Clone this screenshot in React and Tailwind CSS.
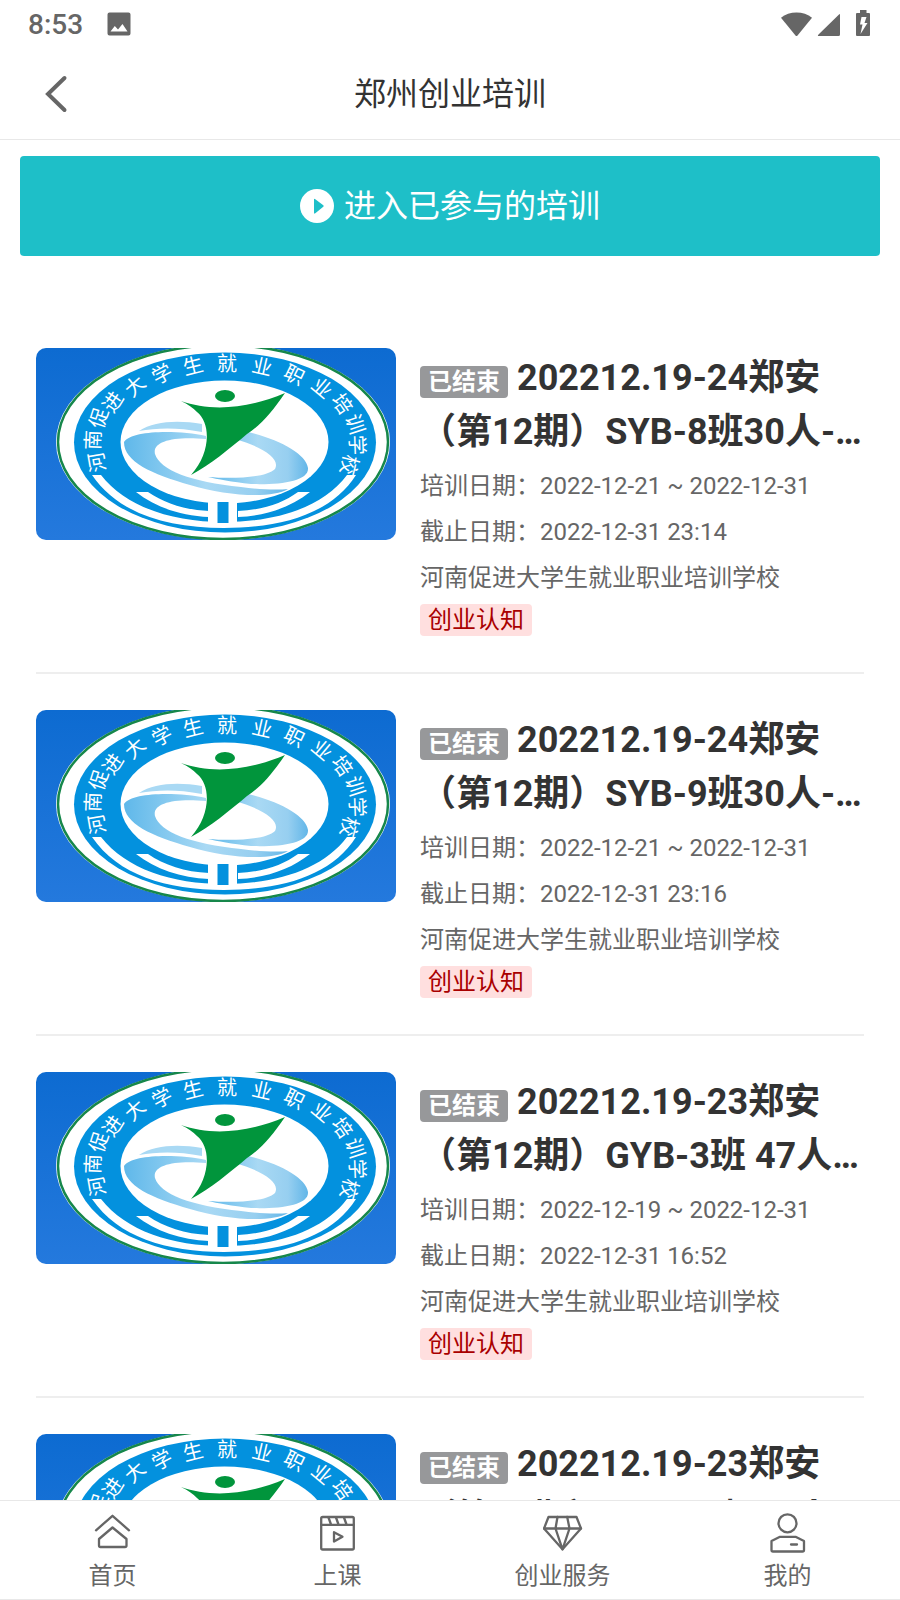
const courses = [
  {
    id: 1,
    title: "202212.19-24郑安（第12期）SYB-8班30人-创业培训",
    start: "2022-12-21",
    end: "2022-12-31",
    deadline: "2022-12-31 23:14",
  },
  {
    id: 2,
    title: "202212.19-24郑安（第12期）SYB-9班30人-创业培训",
    start: "2022-12-21",
    end: "2022-12-31",
    deadline: "2022-12-31 23:16",
  },
  {
    id: 3,
    title: "202212.19-23郑安（第12期）GYB-3班 47人-创业培训",
    start: "2022-12-19",
    end: "2022-12-31",
    deadline: "2022-12-31 16:52",
  },
  {
    id: 4,
    title: "202212.19-23郑安（第12期）GYB-2班 47人-创业培训",
    start: "2022-12-19",
    end: "2022-12-31",
    deadline: "2022-12-31 16:50",
  },
];

// school name around the ring: character, x, y, rotation
const ringText = [
  ["河", 61, 114, -100],
  ["南", 57, 92, -88],
  ["促", 63, 70, -72],
  ["进", 77, 54, -56],
  ["大", 99, 38, -42],
  ["学", 126, 26, -28],
  ["生", 157, 18, -14],
  ["就", 191, 16, 0],
  ["业", 226, 19, 13],
  ["职", 258, 27, 26],
  ["业", 286, 40, 40],
  ["培", 306, 56, 55],
  ["训", 319, 76, 72],
  ["学", 321, 97, 88],
  ["校", 313, 117, 104],
];

function SchoolEmblem({ id }) {
  const bg = `bg-${id}`;
  const orbit = `orbit-${id}`;
  return (
    <svg viewBox="0 0 360 192" className="w-full rounded-[10px]" role="img" aria-label="河南促进大学生就业职业培训学校">
      <defs>
        <linearGradient id={bg} x1="0" y1="0" x2="0" y2="1">
          <stop offset="0" stopColor="#0d6bd1" />
          <stop offset="1" stopColor="#2479dd" />
        </linearGradient>
        <linearGradient id={orbit} x1="0" y1="0" x2="1" y2="0">
          <stop offset="0" stopColor="#5fb8ea" />
          <stop offset="0.5" stopColor="#a9d9f4" />
          <stop offset="0.8" stopColor="#97cff0" />
          <stop offset="1" stopColor="#62b6e8" />
        </linearGradient>
      </defs>
      <rect width="360" height="192" fill={`url(#${bg})`} />
      <ellipse cx="187" cy="94" rx="167" ry="98" fill="#fff" />
      <ellipse cx="187" cy="94" rx="165" ry="97" fill="none" stroke="#16874b" strokeWidth="2.5" />
      <ellipse cx="189" cy="94.500" rx="151" ry="90" fill="#0391de" />
      <ellipse cx="188.500" cy="94" rx="104" ry="61.500" fill="#fff" />

      {/* base and open book */}
      <path d="M56 127 H65 C90 159 136 174 188 174 C241 174 287 159 311 127 H320 C296 165 247 180 188 180 C130 180 82 165 56 127 Z" fill="#fff" />
      <path d="M100 144 H112 C128 155 149 162 173 163 V169 C145 168 119 159 100 144 Z" fill="#fff" />
      <path d="M274 144 H262 C247 155 227 162 202 163 V169 C230 168 255 159 274 144 Z" fill="#fff" />
      <rect x="172" y="153" width="29" height="24" fill="#fff" />
      <rect x="181.500" y="154" width="11" height="21" fill="#0391de" />

      {/* orbit */}
      <path d="M103 83 C118 73 142 72 166 76 V84 C140 79 121 80 103 83 Z" fill="#a9d9f4" />
      <path
        d="M88 94 C96 82 142 82 170 88 V91 C138 88 116 93 119 106 C124 122 155 134 205 139 C224 142 244 142 252 141 C236 151 190 148 154 137 C116 126 88 114 88 94 Z"
        fill={`url(#${orbit})`}
      />
      <path
        d="M208 83 C241 90 270 105 272 120 C273 133 245 137 215 136 C196 134 181 131 172 129 C196 131 230 130 239 121 C245 110 224 98 199 91 Z"
        fill={`url(#${orbit})`}
      />

      {/* figure */}
      <ellipse cx="189" cy="48" rx="10" ry="6" fill="#01953c" />
      <path
        d="M145 53 C173 63 209 62 249 45 C236 64 226 76 211 86 C192 102 175 116 155 127 C175 105 175 75 161 64 C157 60 152 56 145 53 Z"
        fill="#01953c"
      />

      {ringText.map(([char, x, y, angle]) => (
        <text
          key={`${x}-${y}`}
          transform={`translate(${x} ${y}) rotate(${angle})`}
          textAnchor="middle"
          dy="7"
          fontSize="20"
          fill="#fff"
        >
          {char}
        </text>
      ))}
    </svg>
  );
}

function StatusBar() {
  return (
    <div className="flex h-12 shrink-0 items-center justify-between pl-7 pr-[30px] text-[#666]">
      <div className="flex items-center gap-6">
        <span className="pt-[2px] text-[28px] leading-12 font-medium">8:53</span>
        <svg width="24" height="24" viewBox="0 0 24 24" fill="currentColor">
          <path fillRule="evenodd" d="M2.500 0.500 H21.500 Q23.500 0.500 23.500 2.500 V21.500 Q23.500 23.500 21.500 23.500 H2.500 Q0.500 23.500 0.500 21.500 V2.500 Q0.500 0.500 2.500 0.500 Z M3.500 19.500 H20.500 L15.500 12 L11 17.500 L7.800 14 Z" />
        </svg>
      </div>
      <svg width="90" height="28" viewBox="0 0 90 28" fill="currentColor">
        <path d="M1 7.800 C9 0.800 24 0.800 32 7.800 L17.300 25.700 Q16.500 26.500 15.700 25.700 Z" />
        <path d="M59 4.500 Q60 3.500 60 5 V24.500 Q60 26 58.500 26 H39 Q37 26 38.500 24.500 Z" />
        <path fillRule="evenodd" d="M80 0 H86.500 V3 H89 Q90 3 90 4 V25 Q90 26 89 26 H77 Q76 26 76 25 V4 Q76 3 77 3 H80 Z M81.500 7 L80 14.500 H82.500 L80.500 24 L87.500 13 H84.500 L86.500 7 Z" />
      </svg>
    </div>
  );
}

function CourseCard({ course }) {
  return (
    <li className="flex items-start gap-6 border-b-2 border-[#eee] py-9">
      <div className="w-[360px] shrink-0">
        <SchoolEmblem id={course.id} />
      </div>
      <div className="min-w-0 flex-1 pt-[3px]">
        <h2 className="line-clamp-2 text-4xl leading-[54px] font-bold text-[#333]">
          <span className="mr-[9px] inline-block rounded bg-[#97989a] px-2 text-2xl leading-8 text-white">已结束</span>
          {course.title}
        </h2>
        <div className="mt-1 text-2xl leading-[46px] text-[#666]">
          <p>
            培训日期：{course.start} ~ {course.end}
          </p>
          <p>截止日期：{course.deadline}</p>
          <p>河南促进大学生就业职业培训学校</p>
        </div>
        <span className="mt-[3px] block w-fit rounded bg-[#ffdfdf] px-2 text-2xl leading-8 text-[#a90000]">创业认知</span>
      </div>
    </li>
  );
}

const tabs = [
  {
    label: "首页",
    icon: (
      <>
        <path d="M3.500 17.300 L20 2.800 L36.500 17.300" />
        <path d="M20 14.500 L6.500 26 V32.500 Q6.500 34 8 34 H32.500 Q34 34 34 32.500 V26 Z" />
      </>
    ),
  },
  {
    label: "上课",
    icon: (
      <>
        <rect x="3.700" y="4" width="32.600" height="32.500" rx="1.500" />
        <path d="M3.700 11.800 H36.300 M11 4.500 L13.500 11.500 M18.500 4.500 L21 11.500 M26.500 4.500 L29 11.500" />
        <path d="M16.500 19.200 L25 23.800 L16.500 28.500 Z" />
      </>
    ),
  },
  {
    label: "创业服务",
    icon: (
      <>
        <path d="M6 4 H34 L38.500 15.500 L20 36.300 L1.500 15.500 Z" />
        <path d="M1.500 15.500 H38.500 M15 4 L13 15.500 L20 36.300 L27 15.500 L24.700 4" />
      </>
    ),
  },
  {
    label: "我的",
    icon: (
      <>
        <circle cx="20" cy="10.300" r="9" />
        <path d="M4 28 L12.500 23.800 H28 L36.500 28 V37 Q36.500 38.500 35 38.500 H5.500 Q4 38.500 4 37 Z" />
        <path d="M23.500 31.500 H29.500" />
      </>
    ),
  },
];

export default function App() {
  return (
    <div className="flex h-screen flex-col overflow-hidden bg-white font-['Roboto','Noto_Sans_CJK_SC',sans-serif]">
      <StatusBar />

      <header className="grid h-[92px] shrink-0 grid-cols-[80px_1fr_80px] items-center border-b border-[#e8e8e8]">
        <button type="button" aria-label="返回" className="flex justify-end pr-3">
          <svg width="24" height="40" viewBox="0 0 24 40" fill="none" stroke="#666" strokeWidth="4" strokeLinecap="round">
            <path d="M20.500 4 L4 20 L20.500 36" />
          </svg>
        </button>
        <h1 className="text-center text-[32px] leading-[48px] text-[#333]">郑州创业培训</h1>
      </header>

      <main className="min-h-0 flex-1 overflow-hidden">
        <div className="px-5 pt-4">
          <button
            type="button"
            className="flex h-[100px] w-full items-center justify-center gap-[10px] rounded bg-[#1ebfc8] text-[32px] leading-[48px] text-white"
          >
            <svg width="34" height="34" viewBox="0 0 34 34">
              <circle cx="17" cy="17" r="17" fill="#fff" />
              <path d="M14 10.500 Q14 9 15.300 10.200 L23.300 16.300 Q24.200 17 23.300 17.700 L15.300 24.300 Q14 25.300 14 23.500 Z" fill="#1ebfc8" />
            </svg>
            进入已参与的培训
          </button>
        </div>
        <ul className="mt-14 px-9">
          {courses.map((course) => (
            <CourseCard key={course.id} course={course} />
          ))}
        </ul>
      </main>

      <nav className="grid shrink-0 grid-cols-4 border-y border-[#e8e8e8] pt-3 pb-[5px]">
        {tabs.map((tab) => (
          <a key={tab.label} href="#" className="flex flex-col items-center gap-[5px] text-2xl leading-9 text-[#666]">
            <svg
              width="40"
              height="40"
              viewBox="0.5 0 40 40"
              fill="none"
              stroke="currentColor"
              strokeWidth="2.3"
              strokeLinecap="round"
              strokeLinejoin="round"
            >
              {tab.icon}
            </svg>
            {tab.label}
          </a>
        ))}
      </nav>
    </div>
  );
}
